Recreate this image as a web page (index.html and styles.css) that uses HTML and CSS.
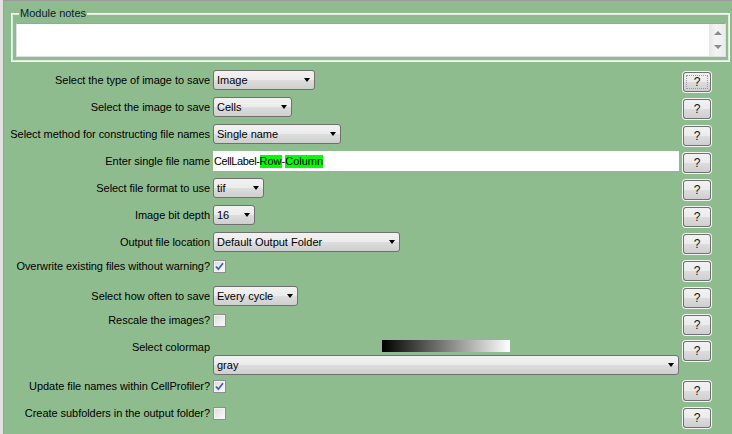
FILE: index.html
```html
<!DOCTYPE html>
<html>
<head>
<meta charset="utf-8">
<link rel="stylesheet" href="styles.css">
</head>
<body>
<div class="frame">
  <div class="inner">
    <div class="notes">
      <span class="legend">Module notes</span>
      <div class="textarea">
        <div class="scrollbar"><span class="arr-up"></span><span class="arr-down"></span></div>
      </div>
    </div>

    <div class="grid">
      <div class="lbl">Select the type of image to save</div>
      <div class="ctl"><div class="dd w102"><span>Image</span><i class="caret"></i></div></div>
      <div class="help"><button class="hbtn focus">?</button></div>

      <div class="lbl">Select the image to save</div>
      <div class="ctl"><div class="dd w79"><span>Cells</span><i class="caret"></i></div></div>
      <div class="help"><button class="hbtn">?</button></div>

      <div class="lbl">Select method for constructing file names</div>
      <div class="ctl"><div class="dd w128"><span>Single name</span><i class="caret"></i></div></div>
      <div class="help"><button class="hbtn">?</button></div>

      <div class="lbl">Enter single file name</div>
      <div class="ctl"><div class="tf"><span class="tight">CellLabel-</span><span class="hl">Row</span><span>-</span><span class="hl">Column</span></div></div>
      <div class="help"><button class="hbtn">?</button></div>

      <div class="lbl">Select file format to use</div>
      <div class="ctl"><div class="dd w51"><span>tif</span><i class="caret"></i></div></div>
      <div class="help"><button class="hbtn">?</button></div>

      <div class="lbl">Image bit depth</div>
      <div class="ctl"><div class="dd w42"><span>16</span><i class="caret"></i></div></div>
      <div class="help"><button class="hbtn">?</button></div>

      <div class="lbl">Output file location</div>
      <div class="ctl"><div class="dd w187"><span>Default Output Folder</span><i class="caret"></i></div></div>
      <div class="help"><button class="hbtn">?</button></div>

      <div class="lbl top">Overwrite existing files without warning?</div>
      <div class="ctl ck"><span class="cb"><svg width="11" height="11" viewBox="0 0 11 11"><path d="M2 5.5 L4.3 8.2 L9 2.2" fill="none" stroke="#4a5aa6" stroke-width="1.7"/></svg></span></div>
      <div class="help"><button class="hbtn">?</button></div>

      <div class="lbl">Select how often to save</div>
      <div class="ctl"><div class="dd w85"><span>Every cycle</span><i class="caret"></i></div></div>
      <div class="help"><button class="hbtn">?</button></div>

      <div class="lbl top">Rescale the images?</div>
      <div class="ctl ck"><span class="cb"></span></div>
      <div class="help"><button class="hbtn">?</button></div>

      <div class="lbl top">Select colormap</div>
      <div class="ctl col">
        <div class="cbar"></div>
        <div class="dd full"><span>gray</span><i class="caret"></i></div>
      </div>
      <div class="help cm"><button class="hbtn">?</button></div>

      <div class="lbl top">Update file names within CellProfiler?</div>
      <div class="ctl ck"><span class="cb"><svg width="11" height="11" viewBox="0 0 11 11"><path d="M2 5.5 L4.3 8.2 L9 2.2" fill="none" stroke="#4a5aa6" stroke-width="1.7"/></svg></span></div>
      <div class="help"><button class="hbtn">?</button></div>

      <div class="lbl top">Create subfolders in the output folder?</div>
      <div class="ctl ck"><span class="cb"></span></div>
      <div class="help"><button class="hbtn">?</button></div>
    </div>
  </div>
</div>
</body>
</html>
```

FILE: styles.css
```css
* { box-sizing: border-box; }
html, body { margin: 0; padding: 0; }
body {
  background: #8fbc8f;
  font-family: "Liberation Sans", Arial, sans-serif;
  font-size: 11px;
  color: #000;
  width: 732px;
  height: 434px;
  overflow: hidden;
}
.frame { height: 434px; border-left: 3px solid #e2e2e2; }
.inner {
  height: 100%;
  border-left: 1px solid #a0a0a0;
  border-top: 1px solid #9a9a9a;
  padding-top: 12px;
}
.notes {
  position: relative;
  margin-left: 7px;
  width: 719px;
  height: 49px;
  border: 1px solid #ffffff;
  box-shadow: inset 0 0 0 1px #dcebdc;
  padding: 9px 3px 4px 4px;
}
.legend {
  position: absolute;
  top: -7px;
  left: 7px;
  padding: 0 1px;
  line-height: 13px;
  background: #8fbc8f;
  color: #0a1830;
}
.textarea {
  height: 100%;
  background: #fff;
  border: 1px solid #e0e0e0;
  border-top-color: #a0a0a0;
  display: flex;
  justify-content: flex-end;
}
.scrollbar {
  width: 16px;
  height: 100%;
  background: linear-gradient(to right, #e8e8e8, #f4f4f4 40%, #ececec);
  border-left: 1px solid #e6e6e6;
  display: flex;
  flex-direction: column;
  align-items: center;
  justify-content: space-between;
  padding: 7px 0;
}
.arr-up {
  width: 0; height: 0;
  border-left: 4px solid transparent;
  border-right: 4px solid transparent;
  border-bottom: 4px solid #8a8a8a;
}
.arr-down {
  width: 0; height: 0;
  border-left: 4px solid transparent;
  border-right: 4px solid transparent;
  border-top: 4px solid #8a8a8a;
}

.grid {
  display: grid;
  margin-top: 5px;
  grid-template-columns: 209px 466px 1fr;
  grid-template-rows: repeat(10, 27px) 39px 27px 27px;
}
.lbl {
  text-align: right;
  padding-right: 3px;
  align-self: center;
  line-height: 13px;
  white-space: nowrap;
  letter-spacing: -0.05px;
}
.lbl.top { align-self: start; margin-top: 4px; }
.ctl { align-self: start; margin-top: 3px; display: flex; }
.ctl.ck { margin-top: 4px; }
.ctl.col { flex-direction: column; align-items: center; }
.help { align-self: start; padding-left: 4px; margin-top: 5px; }
.help.cm { margin-top: 4px; }

.dd {
  height: 20px;
  border: 1px solid #707070;
  border-radius: 3px;
  background: linear-gradient(#f2f2f2, #ebebeb 50%, #dddddd 50%, #cfcfcf);
  display: flex;
  align-items: center;
  justify-content: space-between;
  padding: 0 4px 0 3px;
  line-height: 13px;
}
.w102 { width: 102px; }
.w79 { width: 79px; }
.w128 { width: 128px; }
.w51 { width: 51px; }
.w42 { width: 42px; }
.w187 { width: 187px; }
.w85 { width: 85px; }
.full { width: 100%; margin-top: 3px; }
.caret {
  width: 0; height: 0;
  border-left: 3px solid transparent;
  border-right: 3px solid transparent;
  border-top: 4px solid #000;
}
.tf {
  width: 100%;
  height: 20px;
  background: #fff;
  padding-left: 1px;
  display: flex;
  align-items: center;
  line-height: 13px;
}
.tight { letter-spacing: -0.4px; }
.hl { background: #00ff00; }

.hbtn {
  display: block;
  position: relative;
  width: 28px;
  height: 20px;
  padding: 0;
  border: 1px solid #707070;
  border-radius: 3px;
  box-shadow: 0 0 0 1px #f4f4f4;
  background: linear-gradient(#f2f2f2, #ebebeb 50%, #dddddd 50%, #cfcfcf);
  font-family: "Liberation Sans", Arial, sans-serif;
  font-size: 12px;
  color: #101820;
  line-height: 18px;
}
.hbtn.focus::after {
  content: "";
  position: absolute;
  top: 2px; left: 2px; right: 2px; bottom: 2px;
  border: 1px dotted #9a9a9a;
}

.cb {
  display: flex;
  align-items: center;
  justify-content: center;
  width: 13px;
  height: 13px;
  border: 1px solid #8e8f8f;
  background: linear-gradient(135deg, #dcdcdc, #fbfbfb);
  box-shadow: inset 0 0 0 1px #f4f4f4;
}
.cbar {
  width: 128px;
  height: 12px;
  background: linear-gradient(to right, #000, #fff);
}
```
